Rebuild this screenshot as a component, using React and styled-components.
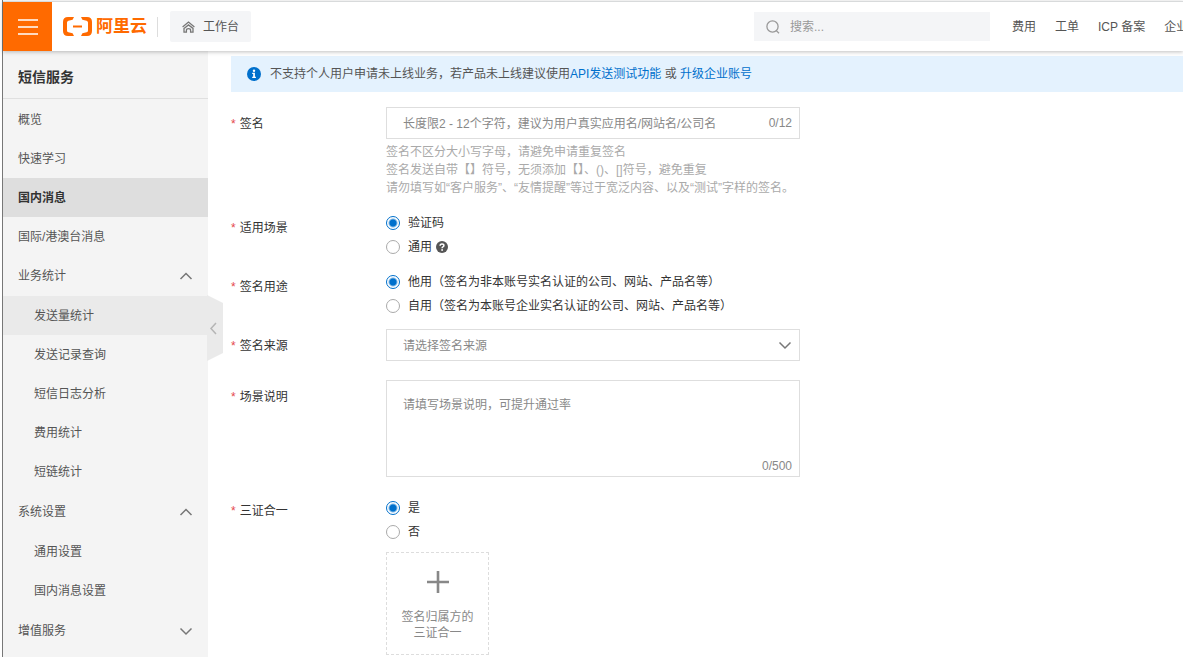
import React, { useState } from "react";
import styled, { createGlobalStyle, css } from "styled-components";

const MENU = [
    { label: "概览" },
    { label: "快速学习" },
    { label: "国内消息", active: true },
    { label: "国际/港澳台消息" },
    {
        label: "业务统计",
        open: true,
        children: [
            { label: "发送量统计", hovered: true },
            { label: "发送记录查询" },
            { label: "短信日志分析" },
            { label: "费用统计" },
            { label: "短链统计" },
        ],
    },
    {
        label: "系统设置",
        open: true,
        children: [{ label: "通用设置" }, { label: "国内消息设置" }],
    },
    { label: "增值服务", open: false, children: [] },
];

const TOP_LINKS = ["费用", "工单", "ICP 备案", "企业"];

const Chevron = ({ up }) => (
    <svg width="14" height="14" viewBox="0 0 14 14" fill="none" stroke="#777" strokeWidth="1.5">
        <path d={up ? "M1.5 10 L7 4.5 L12.5 10" : "M1.5 4.5 L7 10 L12.5 4.5"} />
    </svg>
);

const LogoMark = () => (
    <svg width="29" height="19" viewBox="0 0 29 19" fill="#ff6a00">
        <path d="M11 0 H5 Q0 0 0 5 V14 Q0 19 5 19 H11 L9.6 16.2 L5.4 15.3 Q4 14.9 4 13.4 V5.6 Q4 4.1 5.4 3.7 L9.6 2.8 Z" />
        <path d="M18 0 H24 Q29 0 29 5 V14 Q29 19 24 19 H18 L19.4 16.2 L23.6 15.3 Q25 14.9 25 13.4 V5.6 Q25 4.1 23.6 3.7 L19.4 2.8 Z" />
        <rect x="10" y="8.5" width="9" height="2" />
    </svg>
);

const HomeIcon = () => (
    <svg width="13" height="12" viewBox="0 0 13 12" fill="none" stroke="#777" strokeWidth="1.3">
        <path d="M0.6 6 L6.5 1.1 L12.4 6" />
        <path d="M2 7.4 L6.5 3.9 L11 7.4 V11.2 H8.6 V9.2 Q8.6 7.6 6.5 7.6 Q4.4 7.6 4.4 9.2 V11.2 H2 Z" />
    </svg>
);

const SearchIcon = () => (
    <svg width="14" height="14" viewBox="0 0 14 14" fill="none" stroke="#999" strokeWidth="1.3">
        <circle cx="6.5" cy="6.5" r="5.6" />
        <path d="M10.3 10.6 L13 13.2" />
    </svg>
);

const InfoIcon = () => (
    <svg width="14" height="14" viewBox="0 0 14 14">
        <circle cx="7" cy="7" r="7" fill="#0070cc" />
        <circle cx="7" cy="3.7" r="1.2" fill="#fff" />
        <path d="M5.2 5.8 H7.9 V9.8 H8.9 V11 H5.2 V9.8 H6.2 V7 H5.2 Z" fill="#fff" />
    </svg>
);

const HelpIcon = () => (
    <svg width="12" height="12" viewBox="0 0 12 12">
        <circle cx="6" cy="6" r="6" fill="#555" />
        <path d="M4.1 4.8 Q4.1 2.9 6 2.9 Q7.9 2.9 7.9 4.5 Q7.9 5.4 6.9 5.9 Q6.1 6.3 6.1 7.2" fill="none" stroke="#fff" strokeWidth="1.5" />
        <circle cx="6.1" cy="9" r="0.9" fill="#fff" />
    </svg>
);

const RadioGroup = ({ name, options, value, onChange }) => (
    <div role="radiogroup" aria-label={name}>
        {options.map((option) => (
            <RadioLabel key={option.text}>
                <Radio
                    type="radio"
                    name={name}
                    checked={value === option.text}
                    onChange={() => onChange(option.text)}
                />
                {option.text}
                {option.help && <HelpIcon />}
            </RadioLabel>
        ))}
    </div>
);

const App = () => {
    const [scene, setScene] = useState("验证码");
    const [usage, setUsage] = useState("他用（签名为非本账号实名认证的公司、网站、产品名等）");
    const [merged, setMerged] = useState("是");
    const [sign, setSign] = useState("");
    const [remark, setRemark] = useState("");

    return (
        <Page>
            <GlobalStyle />
            <Header>
                <MenuButton aria-label="menu">
                    <svg width="20" height="16" viewBox="0 0 20 16" stroke="#fff" strokeWidth="1.6">
                        <path d="M0 1 H20 M0 8 H20 M0 15 H20" />
                    </svg>
                </MenuButton>
                <Logo href="#">
                    <LogoMark />
                    阿里云
                </Logo>
                <Divider />
                <WorkbenchButton>
                    <HomeIcon />
                    工作台
                </WorkbenchButton>
                <Search>
                    <SearchIcon />
                    <SearchInput aria-label="search" placeholder="搜索..." />
                </Search>
                <TopLinks>
                    {TOP_LINKS.map((text) => (
                        <a key={text} href="#">{text}</a>
                    ))}
                </TopLinks>
            </Header>

            <Body>
                <Sidebar>
                    <SidebarTitle>短信服务</SidebarTitle>
                    <Menu>
                        {MENU.map((item) => (
                            <li key={item.label}>
                                <MenuItem href="#" $active={item.active}>
                                    {item.label}
                                    {item.children && <Chevron up={item.open} />}
                                </MenuItem>
                                {item.open && (
                                    <SubMenu>
                                        {item.children.map((child) => (
                                            <li key={child.label}>
                                                <MenuItem href="#" $nested $hovered={child.hovered}>
                                                    {child.label}
                                                </MenuItem>
                                            </li>
                                        ))}
                                    </SubMenu>
                                )}
                            </li>
                        ))}
                    </Menu>
                </Sidebar>

                <Content>
                    <Notice>
                        <InfoIcon />
                        <p>
                            不支持个人用户申请未上线业务，若产品未上线建议使用<a href="#">API发送测试功能</a> 或 <a href="#">升级企业账号</a>
                        </p>
                    </Notice>

                    <Form>
                        <Row>
                            <Label htmlFor="sign">签名</Label>
                            <Field>
                                <Control>
                                    <TextInput
                                        id="sign"
                                        maxLength={12}
                                        value={sign}
                                        onChange={(e) => setSign(e.target.value)}
                                        placeholder="长度限2 - 12个字符，建议为用户真实应用名/网站名/公司名"
                                    />
                                    <Counter>{sign.length}/12</Counter>
                                </Control>
                                <Help>
                                    签名不区分大小写字母，请避免申请重复签名<br />
                                    签名发送自带【】符号，无须添加【】、()、[]符号，避免重复<br />
                                    请勿填写如“客户服务”、“友情提醒”等过于宽泛内容、以及“测试”字样的签名。
                                </Help>
                            </Field>
                        </Row>
                        <Row>
                            <Label as="span">适用场景</Label>
                            <Field>
                                <RadioGroup
                                    name="scene"
                                    value={scene}
                                    onChange={setScene}
                                    options={[{ text: "验证码" }, { text: "通用", help: true }]}
                                />
                            </Field>
                        </Row>
                        <Row>
                            <Label as="span">签名用途</Label>
                            <Field>
                                <RadioGroup
                                    name="usage"
                                    value={usage}
                                    onChange={setUsage}
                                    options={[
                                        { text: "他用（签名为非本账号实名认证的公司、网站、产品名等）" },
                                        { text: "自用（签名为本账号企业实名认证的公司、网站、产品名等）" },
                                    ]}
                                />
                            </Field>
                        </Row>
                        <Row $gap={17}>
                            <Label htmlFor="source">签名来源</Label>
                            <Field>
                                <Control>
                                    <Select id="source" defaultValue="">
                                        <option value="">请选择签名来源</option>
                                    </Select>
                                    <SelectArrow>
                                        <Chevron />
                                    </SelectArrow>
                                </Control>
                            </Field>
                        </Row>
                        <Row $gap={17}>
                            <Label htmlFor="remark">场景说明</Label>
                            <Field>
                                <Control>
                                    <TextArea
                                        id="remark"
                                        maxLength={500}
                                        value={remark}
                                        onChange={(e) => setRemark(e.target.value)}
                                        placeholder="请填写场景说明，可提升通过率"
                                    />
                                    <Counter $bottom>{remark.length}/500</Counter>
                                </Control>
                            </Field>
                        </Row>
                        <Row>
                            <Label as="span">三证合一</Label>
                            <Field $stacked>
                                <RadioGroup
                                    name="merged"
                                    value={merged}
                                    onChange={setMerged}
                                    options={[{ text: "是" }, { text: "否" }]}
                                />
                                <Upload type="button">
                                    <svg width="22" height="22" viewBox="0 0 22 22" stroke="#888" strokeWidth="2.6">
                                        <path d="M11 0 V22 M0 11 H22" />
                                    </svg>
                                    <span>
                                        签名归属方的<br />三证合一
                                    </span>
                                </Upload>
                            </Field>
                        </Row>
                    </Form>
                </Content>
            </Body>

            <CollapseHandle aria-label="collapse">
                <svg width="16" height="67" viewBox="0 0 16 67">
                    <path d="M0 0 L16 8 V58 L0 66 Z" fill="#eaeaea" />
                    <path d="M9 28 L4 33.5 L9 39" fill="none" stroke="#b5b5b5" strokeWidth="1.5" />
                </svg>
            </CollapseHandle>
        </Page>
    );
};

const GlobalStyle = createGlobalStyle`
  * {
    box-sizing: border-box;
  }
  body {
    margin: 0;
    background: #fff;
    color: #333;
    font-size: 12px;
    line-height: 18px;
    font-family: "Liberation Sans", "Noto Sans CJK SC", sans-serif;
  }
  button, input, select, textarea {
    font: inherit;
    color: inherit;
    border: 0;
    padding: 0;
    margin: 0;
    background: none;
    border-radius: 0;
  }
  a {
    color: inherit;
    text-decoration: none;
  }
  p, ul {
    margin: 0;
    padding: 0;
    list-style: none;
  }
  svg {
    display: block;
    flex: none;
  }
`;

const Page = styled.div`
  position: relative;
  display: flex;
  flex-direction: column;
  min-height: 100vh;
  margin-left: 2px;
  padding-top: 1px;
  border-left: 1px solid #777;
`;

const Header = styled.header`
  position: relative;
  z-index: 1;
  display: flex;
  align-items: center;
  height: 50px;
  border-top: 1px solid #d8dadb;
  background: #fff;
  box-shadow: 0 1px 4px rgba(0, 0, 0, 0.25);
`;

const MenuButton = styled.button`
  display: flex;
  align-items: center;
  justify-content: center;
  width: 49px;
  height: 100%;
  background: #ff6a00;
`;

const Logo = styled.a`
  display: flex;
  align-items: center;
  gap: 4px;
  margin-left: 11px;
  color: #ff6a00;
  font-size: 17px;
  font-weight: 700;
  line-height: 24px;
`;

const Divider = styled.span`
  width: 1px;
  height: 20px;
  margin: 0 12px 0 10px;
  background: #ddd;
`;

const WorkbenchButton = styled.button`
  display: flex;
  align-items: center;
  gap: 8px;
  height: 31px;
  padding: 0 12px;
  border-radius: 2px;
  background: #f4f5f7;
  color: #555;
`;

const Search = styled.div`
  display: flex;
  align-items: center;
  gap: 10px;
  width: 236px;
  height: 29px;
  margin-left: auto;
  padding: 0 12px;
  background: #f4f5f7;
`;

const SearchInput = styled.input`
  flex: 1;
  min-width: 0;
  outline: none;
  &::placeholder {
    color: #999;
    opacity: 1;
  }
`;

const TopLinks = styled.nav`
  display: flex;
  gap: 19px;
  width: 193px;
  padding-left: 22px;
  overflow: hidden;
  color: #555;
  white-space: nowrap;
`;

const Body = styled.div`
  display: flex;
  flex: 1;
`;

const Sidebar = styled.aside`
  flex: none;
  width: 205px;
  background: #f4f4f4;
`;

const SidebarTitle = styled.div`
  height: 48px;
  padding: 5px 15px 0;
  border-bottom: 1px solid #e0e0e0;
  font-size: 14px;
  font-weight: 700;
  line-height: 42px;
`;

const Menu = styled.ul`
  padding-top: 1px;
`;

const SubMenu = styled.ul`
  padding: 1px 0;
`;

const MenuItem = styled.a`
  display: flex;
  align-items: center;
  justify-content: space-between;
  height: 39px;
  padding: 0 15px;
  color: #555;
  ${({ $nested }) => $nested && css`
    padding-left: 31px;
  `}
  ${({ $hovered }) => $hovered && css`
    background: #eaeaea;
  `}
  ${({ $active }) => $active && css`
    background: #dedede;
    color: #333;
    font-weight: 700;
  `}
`;

const CollapseHandle = styled.button`
  position: absolute;
  top: 50%;
  left: 204px;
  margin-top: -34px;
`;

const Content = styled.main`
  flex: 1;
  min-width: 0;
  padding: 5px 0 0 23px;
`;

const Notice = styled.div`
  display: flex;
  align-items: center;
  gap: 9px;
  height: 36px;
  padding: 0 16px;
  background: #e4f2fe;
  color: #555;
  a {
    color: #0070cc;
  }
`;

const Form = styled.form`
  padding-top: 15px;
`;

const Row = styled.div`
  display: flex;
  align-items: flex-start;
  margin-bottom: ${({ $gap = 11 }) => $gap}px;
  &:last-child {
    margin-bottom: 0;
  }
`;

const Label = styled.label`
  flex: none;
  width: 155px;
  line-height: 34px;
  &::before {
    content: "*";
    margin-right: 4px;
    color: #e5484d;
  }
`;

const Field = styled.div`
  flex: 1;
  max-width: 414px;
  ${({ $stacked }) => $stacked && css`
    display: grid;
    gap: 8px;
    justify-items: start;
    padding-top: 2px;
  `}
`;

const Control = styled.div`
  position: relative;
`;

const controlStyle = css`
  display: block;
  width: 100%;
  border: 1px solid #dedede;
  background: #fff;
  outline: none;
  &::placeholder {
    color: #888;
    opacity: 1;
  }
`;

const TextInput = styled.input`
  ${controlStyle}
  height: 32px;
  padding: 2px 48px 0 16px;
`;

const Select = styled.select`
  ${controlStyle}
  height: 32px;
  padding: 2px 32px 0 16px;
  appearance: none;
  color: #888;
`;

const SelectArrow = styled.span`
  position: absolute;
  top: 9px;
  right: 8px;
  pointer-events: none;
`;

const TextArea = styled.textarea`
  ${controlStyle}
  height: 97px;
  padding: 15px 16px;
  resize: none;
`;

const Counter = styled.span`
  position: absolute;
  right: 8px;
  bottom: ${({ $bottom }) => ($bottom ? "2px" : "7px")};
  color: #888;
`;

const Help = styled.p`
  padding: 4px 0 3px;
  color: #aaa;
  white-space: nowrap;
`;

const RadioLabel = styled.label`
  display: flex;
  align-items: center;
  height: 24px;
  white-space: nowrap;
  svg {
    margin-left: 4px;
  }
`;

const Radio = styled.input`
  appearance: none;
  flex: none;
  width: 14px;
  height: 14px;
  margin-right: 8px;
  border: 1px solid #aaa;
  border-radius: 50%;
  background: #fff;
  &:checked {
    border-color: #0070cc;
    background: radial-gradient(circle, #0070cc 3px, #fff 5px);
  }
`;

const Upload = styled.button`
  display: flex;
  flex-direction: column;
  align-items: center;
  gap: 16px;
  width: 103px;
  height: 103px;
  padding-top: 18px;
  border: 1px dashed #ddd;
  color: #888;
  line-height: 16px;
`;

export default App;
